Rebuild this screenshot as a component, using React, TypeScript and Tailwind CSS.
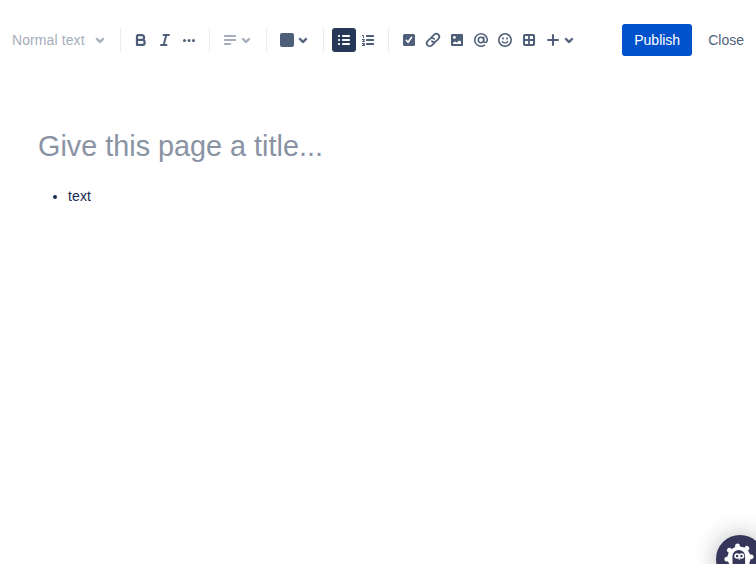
import type { ReactNode } from "react";

function Icon({ children }: { children: ReactNode }) {
  return (
    <svg width="24" height="24" viewBox="0 0 24 24" fill="none" stroke="currentColor" strokeWidth="2" strokeLinecap="round" strokeLinejoin="round" className="block shrink-0">
      {children}
    </svg>
  );
}

function Tool({ label, children, active }: { label: string; children: ReactNode; active?: boolean }) {
  return (
    <button
      aria-label={label}
      className={
        active
          ? "flex h-6 w-6 items-center justify-center rounded-[3px] bg-[#253858] text-white"
          : "flex h-6 w-6 items-center justify-center rounded-[3px]"
      }
    >
      <Icon>{children}</Icon>
    </button>
  );
}

function Chevron() {
  return (
    <Icon>
      <path
        fill="currentColor"
        strokeWidth="0.4"
        d="M8.292 10.293a1.009 1.009 0 0 0 0 1.419l2.939 2.965c.218.215.5.322.779.322s.556-.107.769-.322l2.93-2.955a1.01 1.01 0 0 0 0-1.419.987.987 0 0 0-1.406 0l-2.298 2.317-2.307-2.327a.99.99 0 0 0-1.406 0z"
      />
    </Icon>
  );
}

function Separator() {
  return <div className="mx-2 h-6 w-px shrink-0 bg-[#ebecf0]" />;
}

function Dropdown({ label, children, muted }: { label: string; children: ReactNode; muted?: boolean }) {
  return (
    <button aria-label={label} className={muted ? "flex h-6 w-10 items-center text-[#a5adba]" : "flex h-6 w-10 items-center"}>
      <Icon>{children}</Icon>
      <span className="-ml-2">
        <Chevron />
      </span>
    </button>
  );
}

function Toolbar() {
  return (
    <header className="flex h-20 items-center pr-3 text-[14px] text-[#505f79]">
      <button className="flex h-6 w-28 items-center justify-between pl-3 text-[#a5adba]">
        <span className="whitespace-nowrap tracking-[0.1px]">Normal text</span>
        <Chevron />
      </button>
      <Separator />
      <Tool label="Bold">
        <path strokeWidth="2.2" strokeLinecap="butt" d="M8 7.1h4.7a2.4 2.4 0 0 1 0 4.8H8M8 11.9h5.2a2.5 2.5 0 0 1 0 5H8V7.1" />
      </Tool>
      <Tool label="Italic">
        <path d="M10.5 7H16M8 17h5.5M13.3 7l-2.6 10" />
      </Tool>
      <Tool label="More formatting">
        <g fill="currentColor" stroke="none">
          <circle cx="7.5" cy="12.5" r="1.5" />
          <circle cx="12" cy="12.5" r="1.5" />
          <circle cx="16.5" cy="12.5" r="1.5" />
        </g>
      </Tool>
      <Separator />
      <Dropdown label="Align" muted>
        <g fill="currentColor" stroke="none">
          <rect x="6" y="7" width="12" height="2" rx="0.8" />
          <rect x="6" y="11" width="12" height="2" rx="0.8" />
          <rect x="6" y="15" width="7" height="2" rx="0.8" />
        </g>
      </Dropdown>
      <Separator />
      <Dropdown label="Text color">
        <rect x="5" y="5" width="14" height="14" rx="2" fill="currentColor" stroke="none" />
      </Dropdown>
      <Separator />
      <Tool label="Bullet list" active>
        <g fill="currentColor" stroke="none">
          <rect x="6" y="7" width="2" height="2" rx="0.7" />
          <rect x="6" y="11" width="2" height="2" rx="0.7" />
          <rect x="6" y="15" width="2" height="2" rx="0.7" />
          <rect x="10" y="7" width="8" height="2" rx="0.7" />
          <rect x="10" y="11" width="8" height="2" rx="0.7" />
          <rect x="10" y="15" width="8" height="2" rx="0.7" />
        </g>
      </Tool>
      <Tool label="Numbered list">
        <g fill="currentColor" stroke="none">
          <rect x="10" y="7" width="8" height="2" rx="0.5" />
          <rect x="10" y="11" width="8" height="2" rx="0.5" />
          <rect x="10" y="15" width="8" height="2" rx="0.5" />
        </g>
        <path strokeWidth="1" strokeLinecap="butt" strokeLinejoin="miter" d="M6 7.5h1.5V10M6 11.5h2.5v.6L6.6 13.3v.2H9M6 15.5h2.5v2H6M6.8 16.5h1.6" />
      </Tool>
      <Separator />
      <Tool label="Action item">
        <rect x="6" y="6" width="12" height="12" rx="1.5" fill="currentColor" stroke="none" />
        <path stroke="#fff" strokeWidth="1.6" d="m9.3 12.3 1.8 2 3.5-5" />
      </Tool>
      <Tool label="Link">
        <g transform="rotate(-45 12 12)">
          <path strokeWidth="1.7" d="M11.6 15H7.4a3 3 0 0 1 0-6h3.2a3 3 0 0 1 3 3M12.4 9h4.2a3 3 0 0 1 0 6h-3.2a3 3 0 0 1-3-3" />
        </g>
      </Tool>
      <Tool label="Image">
        <rect x="6" y="6" width="12" height="12" rx="1" fill="currentColor" stroke="none" />
        <g fill="#fff" stroke="none">
          <circle cx="9.4" cy="9.4" r="1.4" />
          <path d="M8 16v-1.3l2-1.1 1.7.9 2.5-2.1L16 13.6V16z" />
        </g>
      </Tool>
      <Tool label="Mention">
        <circle cx="12" cy="12" r="2.7" strokeWidth="1.5" />
        <path strokeWidth="1.5" d="M14.7 9.3v3.6c0 2.2 3.6 2.2 3.6-.9a6.3 6.3 0 1 0-2.7 5.2" />
      </Tool>
      <Tool label="Emoji">
        <circle cx="12" cy="12" r="6.2" strokeWidth="1.6" />
        <path strokeWidth="1.3" d="M9.4 13.4c.8 2 4.4 2 5.2 0" />
        <circle cx="10" cy="10.5" r="1" fill="currentColor" stroke="none" />
        <circle cx="14" cy="10.5" r="1" fill="currentColor" stroke="none" />
      </Tool>
      <Tool label="Table">
        <rect x="7" y="7" width="10" height="10" rx="0.7" />
        <path strokeWidth="1.8" d="M12 7v10M7 12h10" />
      </Tool>
      <Dropdown label="Insert">
        <path d="M12 7v10M7 12h10" />
      </Dropdown>
      <div className="ml-auto flex items-center gap-4">
        <button className="h-8 w-[70px] rounded-[3px] bg-[#0052cc] text-white">Publish</button>
        <button>Close</button>
      </div>
    </header>
  );
}

function HelpBadge() {
  return (
    <button aria-label="Help" className="absolute top-[535px] left-[716px] h-12 w-12 rounded-full bg-[#36355a] shadow-[0_0_24px_rgba(0,0,0,0.28)]">
      <svg width="48" height="48" viewBox="0 0 48 48" className="block">
        <circle cx="23" cy="23" r="11.5" fill="#fff" />
        <path
          stroke="#fff"
          strokeWidth="4.8"
          strokeLinecap="round"
          d="M23 23 21.5 10.8M23 23 30.8 13.4M23 23 35.2 21.8M23 23 32.6 30.8M23 23 24.4 35.2M23 23 15.2 32.6M23 23 10.8 24.2M23 23 13.4 15.2"
        />
        <path fill="#36355a" d="M16.5 30v-8.8a6.3 6.3 0 0 1 12.6 0V30z" />
        <g fill="#36355a" stroke="#fff" strokeWidth="1.6">
          <circle cx="21.1" cy="21" r="2" />
          <circle cx="25.5" cy="21" r="2" />
        </g>
        <path fill="#fff" d="M21.9 23.2h2.8l-1.4 1.8z" />
      </svg>
    </button>
  );
}

export default function App() {
  return (
    <div className="relative h-[564px] w-[756px] overflow-hidden bg-white font-['Liberation_Sans',Arial,sans-serif]">
      <Toolbar />
      <main className="px-[38px] pt-[48px]">
        <h1 className="text-[28.8px] leading-9 text-[#8993a4]">Give this page a title...</h1>
        <ul className="mt-5 list-disc pl-[30px] text-[14px] leading-6 tracking-[0.1px] text-[#172b4d]">
          <li>text</li>
        </ul>
      </main>
      <HelpBadge />
    </div>
  );
}
